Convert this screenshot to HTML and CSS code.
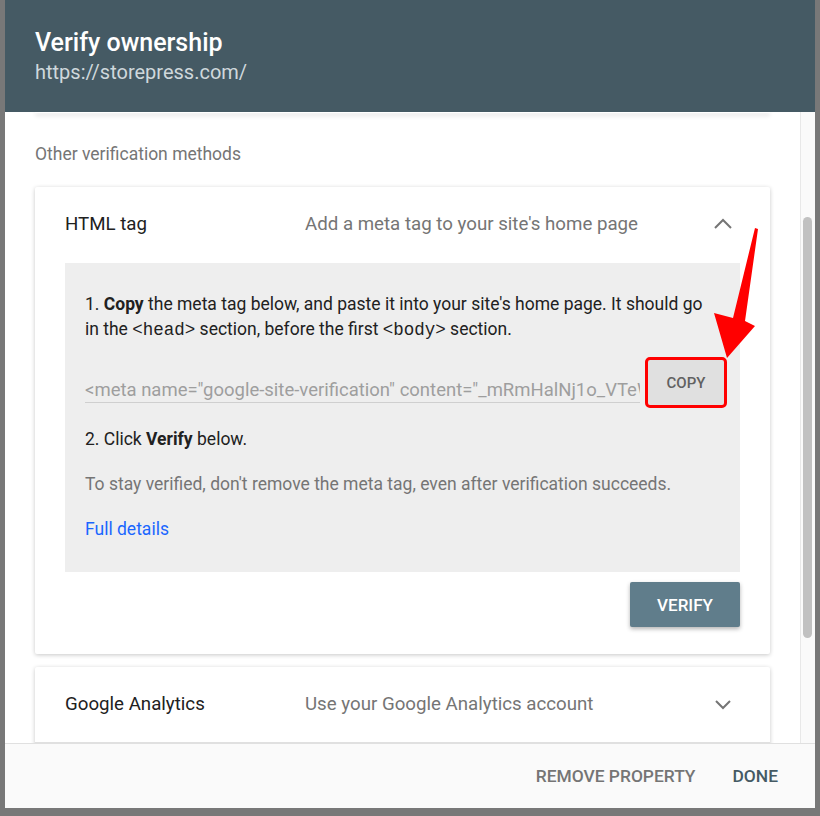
FILE: index.html
```html
<!DOCTYPE html>
<html lang="en">
<head>
    <meta charset="UTF-8">
    <meta name="viewport" content="width=device-width, initial-scale=1.0">
    <title>Verify ownership</title>
    <link rel="stylesheet" href="styles.css">
</head>
<body>
    <div class="backdrop">
        <div class="dialog">
            <header class="dialog-head">
                <h1>Verify ownership</h1>
                <div class="site">https://storepress.com/</div>
            </header>

            <div class="dialog-body">
                <div class="scroll">
                    <div class="card card-tail"></div>

                    <p class="section-label">Other verification methods</p>

                    <section class="card">
                        <div class="card-head">
                            <span class="method">HTML tag</span>
                            <span class="method-desc">Add a meta tag to your site's home page</span>
                            <svg class="chevron" width="20" height="14" viewBox="0 0 20 14">
                                <polyline points="2,11 10,3 18,11" fill="none" stroke="#757575" stroke-width="2"/>
                            </svg>
                        </div>

                        <div class="instructions">
                            <p class="step step-one">1. <b>Copy</b> the meta tag below, and paste it into your site's home page. It should go in the <code>&lt;head&gt;</code> section, before the first <code>&lt;body&gt;</code> section.</p>

                            <div class="copy-row">
                                <div class="meta-field">&lt;meta name="google-site-verification" content="_mRmHalNj1o_VTeWq8zKpL3xYd9sRcf0uA2bGhT7nE4" /&gt;</div>
                                <button class="btn-copy">COPY</button>
                            </div>

                            <p class="step">2. Click <b>Verify</b> below.</p>
                            <p class="step note">To stay verified, don't remove the meta tag, even after verification succeeds.</p>
                            <p class="step"><a href="#" class="details">Full details</a></p>
                        </div>

                        <div class="card-actions">
                            <button class="btn-verify">VERIFY</button>
                        </div>
                    </section>

                    <section class="card">
                        <div class="card-head card-head-line">
                            <span class="method">Google Analytics</span>
                            <span class="method-desc">Use your Google Analytics account</span>
                            <svg class="chevron" width="20" height="14" viewBox="0 0 20 14">
                                <polyline points="3,4 10,11 17,4" fill="none" stroke="#757575" stroke-width="2"/>
                            </svg>
                        </div>
                        <div class="card-rest"></div>
                    </section>
                </div>

                <div class="scrollbar">
                    <div class="thumb"></div>
                </div>
            </div>

            <footer class="dialog-foot">
                <button class="btn-text">REMOVE PROPERTY</button>
                <button class="btn-text btn-done">DONE</button>
            </footer>
        </div>

        <!-- red annotation arrow over the dialog -->
        <svg class="arrow" width="820" height="816" viewBox="0 0 820 816">
            <polygon points="755,228 758,229 745,321 755,326 727,358 714,313 733,318" fill="#ff0000"/>
        </svg>
    </div>
</body>
</html>
```

FILE: styles.css
```css
body {
    margin: 0;
    background-color: #787878;
    font-family: Roboto, "Noto Sans", Arial, sans-serif;
}

.backdrop {
    position: relative;
    height: 816px;
    overflow: hidden;
}

.dialog {
    margin: 0 5px;
    height: 808px;
    background-color: #fff;
    display: flex;
    flex-direction: column;
}

/* header */
.dialog-head {
    height: 112px;
    box-sizing: border-box;
    padding: 28px 30px 0;
    background-color: #455a64;
    flex-shrink: 0;
}

.dialog-head h1 {
    margin: 0;
    font-size: 25px;
    line-height: 30px;
    font-weight: 500;
    color: #fff;
}

.site {
    margin-top: 2px;
    font-size: 20px;
    line-height: 24px;
    font-weight: 400;
    color: #cfd8dc;
}

/* scroll area */
.dialog-body {
    flex: 1;
    min-height: 0;
    display: flex;
    overflow: hidden;
}

.scroll {
    flex: 1;
    padding: 0 30px;
    overflow: hidden;
}

.scrollbar {
    width: 14px;
    background-color: #fafafa;
    border-left: 1px solid #e8e8e8;
    padding-top: 105px;
}

.thumb {
    width: 9px;
    height: 421px;
    margin-left: 2px;
    border-radius: 5px;
    background-color: #c1c1c1;
}

.card {
    background-color: #fff;
    box-shadow: 0 1px 4px rgba(0, 0, 0, 0.22);
    border-radius: 2px;
}

.card-tail {
    height: 1px;
    box-shadow: 0 2px 4px rgba(0, 0, 0, 0.3);
}

.card + .card {
    margin-top: 13px;
}

.section-label {
    margin: 29px 0 21px;
    font-size: 17.5px;
    line-height: 24px;
    color: #757575;
}

.card-head {
    display: flex;
    align-items: center;
    height: 76px;
    box-sizing: border-box;
    padding: 0 37px 2px 30px;
}

.card-head-line {
    border-bottom: 1px solid #e0e0e0;
}

.method {
    width: 240px;
    font-size: 18.7px;
    color: #212121;
}

.method-desc {
    flex: 1;
    font-size: 18.7px;
    color: #757575;
}

.chevron {
    display: block;
}

/* instructions box */
.instructions {
    margin: 0 30px;
    padding: 29px 16px 30px 20px;
    background-color: #eeeeee;
}

.step {
    margin: 20px 0 0;
    font-size: 17.5px;
    line-height: 25px;
    color: #212121;
}

.step-one {
    margin-top: 0;
    width: 624px;
}

.step b {
    font-weight: 700;
}

.step code {
    font-family: "Liberation Mono", "DejaVu Sans Mono", monospace;
    font-size: 17.5px;
}

.note {
    color: #757575;
}

.details {
    color: #1a66ff;
    text-decoration: none;
}

.copy-row {
    display: flex;
    align-items: flex-end;
    margin-top: 17px;
}

.copy-row + .step {
    margin-top: 22px;
}

.meta-field {
    flex: 1;
    margin-bottom: 2px;
    font-size: 18.5px;
    line-height: 24px;
    color: #9e9e9e;
    white-space: nowrap;
    overflow: hidden;
    border-bottom: 1px solid #cfcfcf;
}

.btn-copy {
    width: 76px;
    height: 45px;
    margin-left: 8px;
    border: none;
    border-radius: 2px;
    background-color: #e0e0e0;
    color: #616161;
    font-family: Roboto, Arial, sans-serif;
    font-size: 15px;
    font-weight: 500;
    outline: 3px solid #ff0000;
}

.card-actions {
    display: flex;
    justify-content: flex-end;
    padding: 10px 30px 27px;
}

.btn-verify {
    width: 110px;
    height: 45px;
    border: none;
    border-radius: 2px;
    background-color: #607d8b;
    color: #fff;
    font-family: Roboto, Arial, sans-serif;
    font-size: 17px;
    font-weight: 500;
    box-shadow: 0 2px 4px rgba(0, 0, 0, 0.3);
}

.card-rest {
    height: 40px;
}

/* footer */
.dialog-foot {
    flex-shrink: 0;
    height: 65px;
    box-sizing: border-box;
    display: flex;
    justify-content: flex-end;
    align-items: center;
    gap: 21px;
    padding: 0 29px 0 0;
    background-color: #fafafa;
    border-top: 1px solid #e0e0e0;
}

.btn-text {
    padding: 0 8px;
    border: none;
    background: none;
    font-family: Roboto, Arial, sans-serif;
    font-size: 17.4px;
    font-weight: 500;
    color: #757575;
}

.btn-done {
    color: #455a64;
}

.arrow {
    position: absolute;
    left: 0;
    top: 0;
    pointer-events: none;
}
```
